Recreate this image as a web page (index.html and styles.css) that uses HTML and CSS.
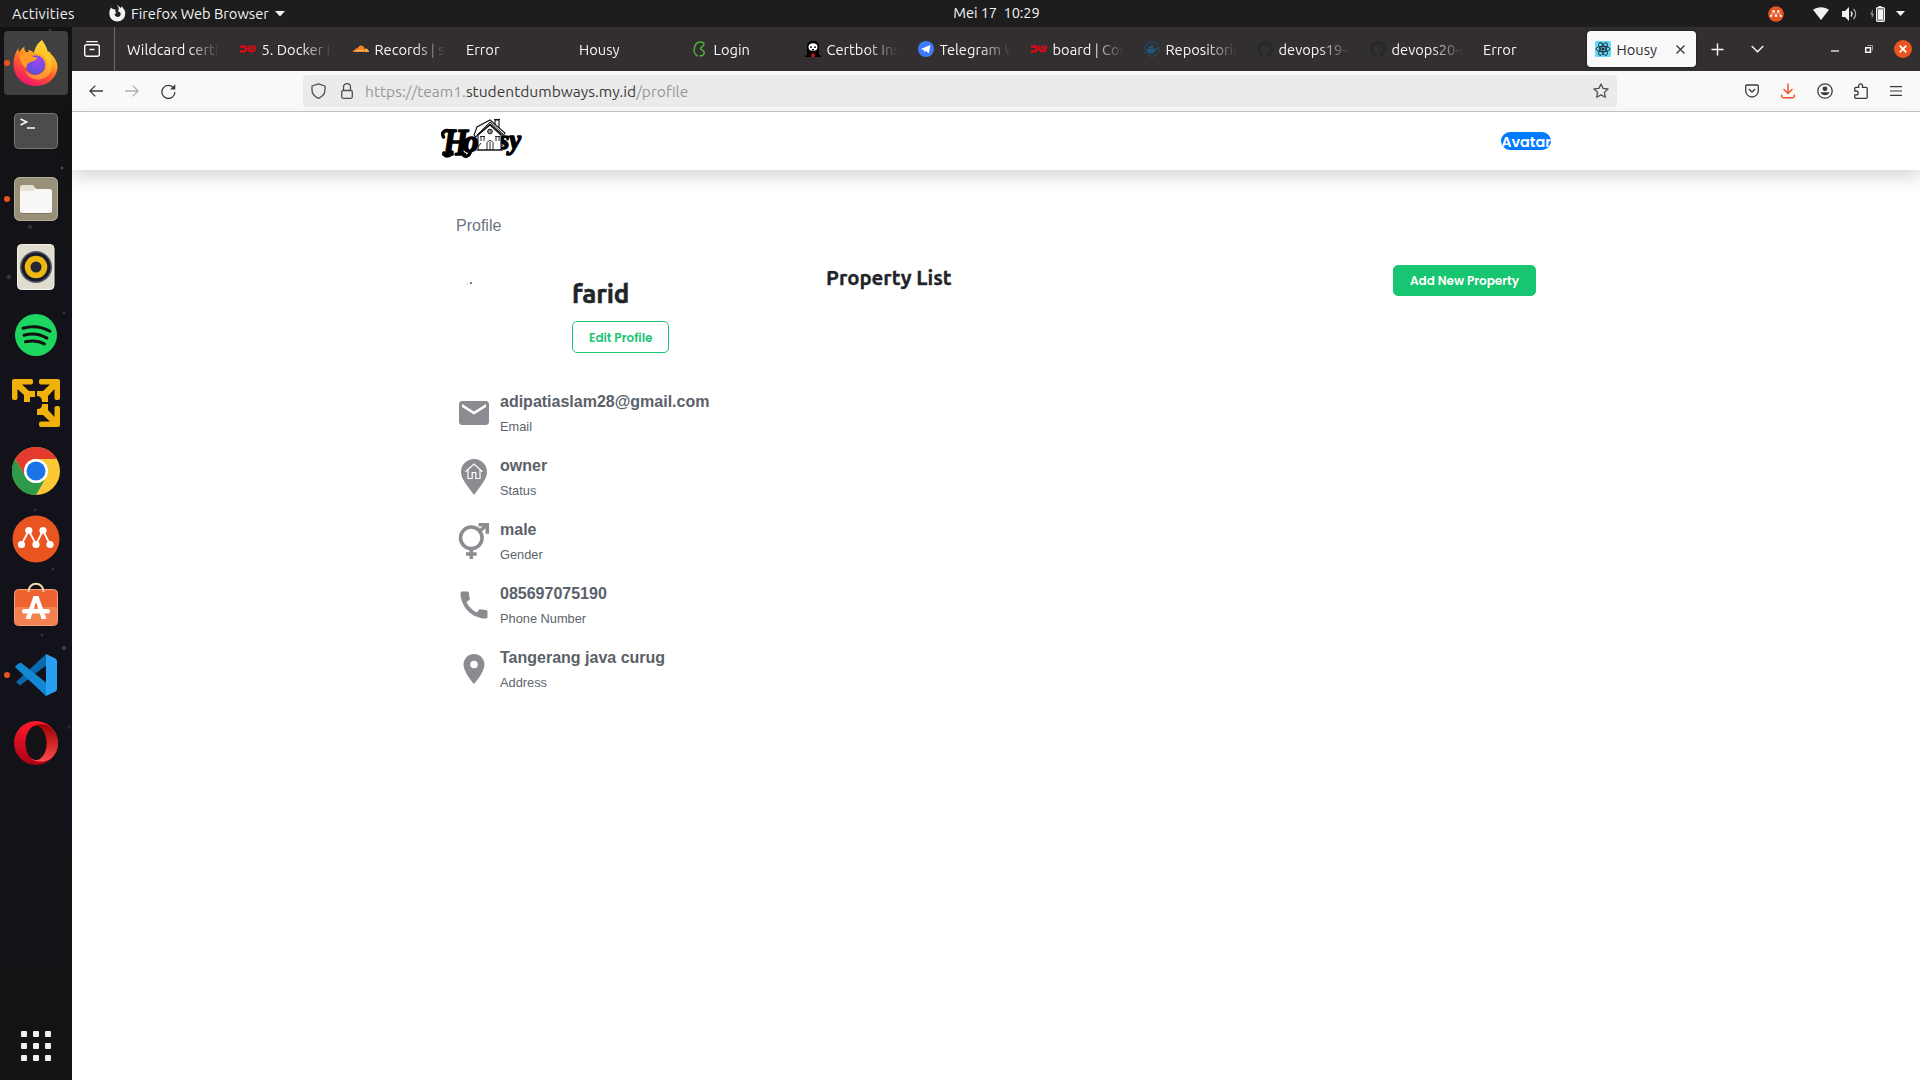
FILE: index.html
```html
<!DOCTYPE html>
<html lang="id">
<head>
<meta charset="utf-8">
<title>Housy</title>
<link rel="stylesheet" href="styles.css">
</head>
<body>
<svg class="defs" width="0" height="0" aria-hidden="true">
  <symbol id="dw" viewBox="0 0 16 16"><path d="M0 5.600h3.600a2.400 2.400 0 0 1 0 4.800H0" fill="none" stroke="#e50914" stroke-width="2.200"/><path d="M8.600 4.400v3.200a2.800 2.800 0 0 0 2.800 2.900h.5a2.800 2.800 0 0 0 2.800-2.900V4.400M11.700 4.400v4" fill="none" stroke="#e50914" stroke-width="2.100"/></symbol>
  <symbol id="github" viewBox="0 0 16 16"><path fill="#24292e" d="M8 0C3.58 0 0 3.58 0 8c0 3.54 2.29 6.53 5.47 7.59.4.07.55-.17.55-.38 0-.19-.01-.82-.01-1.49-2.01.37-2.53-.49-2.69-.94-.09-.23-.48-.94-.82-1.13-.28-.15-.68-.52-.01-.53.63-.01 1.08.58 1.23.82.72 1.21 1.87.87 2.33.66.07-.52.28-.87.51-1.07-1.78-.2-3.64-.89-3.64-3.95 0-.87.31-1.59.82-2.15-.08-.2-.36-1.02.08-2.12 0 0 .67-.21 2.2.82a7.6 7.6 0 0 1 4 0c1.53-1.04 2.2-.82 2.2-.82.44 1.1.16 1.92.08 2.12.51.56.82 1.27.82 2.15 0 3.07-1.87 3.75-3.65 3.95.29.25.54.73.54 1.48 0 1.07-.01 1.93-.01 2.2 0 .21.15.46.55.38A8.01 8.01 0 0 0 16 8c0-4.42-3.58-8-8-8z"/></symbol>
  <symbol id="multipass" viewBox="0 0 48 48"><circle cx="24" cy="24" r="23.500" fill="#e95420"/><path d="M9.500 29.500 16.800 15.500 24 29.500 31 15.500 38 29.500" fill="none" stroke="#fff" stroke-width="1.800"/><g fill="#fff"><circle cx="9.500" cy="29.500" r="3.600"/><circle cx="16.800" cy="15.500" r="3.600"/><circle cx="24" cy="29.500" r="3.600"/><circle cx="31" cy="15.500" r="3.600"/><circle cx="38" cy="29.500" r="3.600"/></g></symbol>
</svg>

<header class="topbar">
  <span class="activities">Activities</span>
  <span class="appmenu">
    <svg width="17" height="17" viewBox="0 0 17 17"><path fill="#f2f2f2" d="M7.500.3C9 1 9.800 2.300 9.800 3.700L9 6.500c2 .2 3 1.500 2.600 3.200-.4 1.500-1.800 2.300-3.200 2.200C6.600 11.800 5.400 10.400 5.700 8.800l1.800-.6L6.300 6.500l.3-1.700-1.900-.6L3 3.500 2.200 2.500C1 4.200.3 6.200.3 8.500a8 8 0 0 0 16 0c0-2.200-.8-3.900-2.300-5.300-.4-.6-.6-1.200-.7-2L11.500 3C10.700 1.700 9.300.6 7.500.3z"/></svg>
    <span class="apptext">Firefox Web Browser</span>
    <svg width="10" height="6" viewBox="0 0 10 6"><path d="M0 0h10L5 5.500z" fill="#f2f2f2"/></svg>
  </span>
  <span class="clock">Mei 17&nbsp; 10:29</span>
  <span class="tray">
    <svg class="tray-mp" width="16" height="16"><use href="#multipass"/></svg>
    <svg class="tray-wifi" width="16" height="13" viewBox="0 0 16 13"><path d="M0 2.800C4.500-.7 11.500-.7 16 2.800L8 13z" fill="#f2f2f2"/></svg>
    <svg class="tray-vol" width="16" height="14" viewBox="0 0 16 14"><path d="M0 4h3l4-4v14l-4-4H0z" fill="#f2f2f2"/><path d="M9 4.500a4 4 0 0 1 0 5" fill="none" stroke="#f2f2f2" stroke-width="1.300"/><path d="M11.500 2a7 7 0 0 1 0 10" fill="none" stroke="#aaa" stroke-width="1.300"/></svg>
    <svg class="tray-bat" width="15" height="16" viewBox="0 0 15 16"><path d="M3 3 0 8.500h1.700V13l2.500-5.500H2.600z" fill="#888"/><path d="M8.500 0h3v1.500h-3z" fill="#f2f2f2"/><rect x="6.700" y="1.700" width="7.600" height="13.600" rx="1" fill="none" stroke="#f2f2f2" stroke-width="1.400"/><path d="M8 3.200h5v10.600H8z" fill="#f2f2f2"/></svg>
    <svg width="9" height="5" viewBox="0 0 9 5"><path d="M0 0h9L4.500 5z" fill="#f2f2f2"/></svg>
  </span>
</header>

<div class="desktop">
  <nav class="dock">
    <div class="app active running"><svg width="46" height="48" viewBox="0 0 46 48">
      <defs>
        <linearGradient id="fx" x1=".8" y1="0" x2=".3" y2="1"><stop offset="0" stop-color="#ffe93f"/><stop offset=".35" stop-color="#ffb01f"/><stop offset=".62" stop-color="#ff5a2b"/><stop offset="1" stop-color="#ee0f72"/></linearGradient>
        <radialGradient id="fp" cx=".6" cy=".3" r=".8"><stop offset="0" stop-color="#a043f5"/><stop offset="1" stop-color="#4c55d6"/></radialGradient>
      </defs>
      <path d="M29 1c2 3 4 6 5 9l1 3c1-1 2 0 3 2 4 4 7 9 6.500 14C43 40 34 47 22.500 47 10 47 1 38 .5 26 .4 19 2 14 5.500 9c0 2 0 3 1 4C8 11 9 9 11.500 7.500c-.5 3 0 4 1.500 5.500h3l-1-2c3 0 5 2 6 3 1-5 3-9 8-13z" fill="url(#fx)"/>
      <path d="M29 1c-5 4-7 8-8 13 6-1 11 3 12 8 2 8-4 14-11 14-5 0-8-2-10-5 2 8 10 11 17 9 9-3 13-12 8-22-1-3-4-6-5-8-1-3-3-6-3-9z" fill="#ffd034" opacity=".55"/>
      <circle cx="22.500" cy="26" r="9.700" fill="url(#fp)"/>
      <path d="M7 15c4-2 8-1 11 1.500 2 1.500 4 2 6.500 2-1 3-4 3.500-7 4.500-3 1.200-4 3-4 6C8 26 6 20 7 15z" fill="#ff9b26"/>
    </svg></div>
    <div class="app"><svg width="44" height="36" viewBox="0 0 44 36"><rect x=".5" y=".5" width="43" height="35" rx="4" fill="#4c4c4c" stroke="#777"/><path d="m6.500 6 6 3-6 3" fill="none" stroke="#f4f4f4" stroke-width="1.800"/><path d="M13 15h8" stroke="#f4f4f4" stroke-width="1.600"/></svg></div>
    <div class="app running"><svg width="44" height="44" viewBox="0 0 44 44"><rect x=".5" y=".5" width="43" height="43" rx="5" fill="#989079" stroke="#b5ae98"/><path d="M6 30V11a3 3 0 0 1 3-3h10l3 4h13v5z" fill="#e4e1d6"/><rect x="6" y="12" width="32" height="24" rx="2.500" fill="#f9f8f7"/><path d="M6 14h13l3-3H10q-4 0-4 3z" fill="#e4e1d6"/><path d="M7 36.500h30" stroke="#7c7561"/></svg></div>
    <div class="app"><svg width="38" height="46" viewBox="0 0 38 46"><rect x=".5" y=".5" width="36.500" height="45" rx="4" fill="#e0dcd0" stroke="#f4f2ea"/><circle cx="19" cy="23" r="16" fill="#585d68"/><circle cx="19" cy="23" r="14.500" fill="#171b2b"/><circle cx="19" cy="23" r="11.300" fill="#eeb711"/><circle cx="19" cy="23" r="5.500" fill="#222733"/></svg></div>
    <div class="app"><svg width="42" height="42" viewBox="0 0 42 42"><circle cx="21" cy="21" r="21" fill="#1ed760"/><path d="M8 14.300c9-2.600 19-1.600 27 3M9 21.300c7.500-2.200 16-1.300 23 2.800M10.500 27.800c6.500-1.500 13.500-1 19 2.200" fill="none" stroke="#121212" stroke-width="3" stroke-linecap="round"/></svg></div>
    <div class="app"><svg width="48" height="48" viewBox="0 0 48 48"><g fill="#f0b20a"><path d="M0 2a2 2 0 0 1 2-2h17a2 2 0 0 1 2 2v1.500A2 2 0 0 1 19 5.500h-9l7 6.500h6v6h-5v5h-6v-7L5.500 10v9a2 2 0 0 1-2 2H2a2 2 0 0 1-2-2z"/><path d="M48 2a2 2 0 0 0-2-2H29a2 2 0 0 0-2 2v1.500a2 2 0 0 0 2 2h9L31 12h-6v5c3 0 5 2 5 6h6v-6l6.500-7v9a2 2 0 0 0 2 2H46a2 2 0 0 0 2-2z"/><path d="M48 46a2 2 0 0 1-2 2H29a2 2 0 0 1-2-2v-1.500a2 2 0 0 1 2-2h9L31 36h-6v-6c3 0 5-1 5-5h6v6l6.500 7v-9a2 2 0 0 1 2-2H46a2 2 0 0 1 2 2z"/></g></svg></div>
    <div class="app"><svg width="48" height="48" viewBox="0 0 48 48"><circle cx="24" cy="24" r="24" fill="#fcc934"/><path d="M3.200 12A24 24 0 0 1 44.800 12H24a12 12 0 0 0-10.400 18z" fill="#e33b2e"/><path d="M3.200 12A24 24 0 0 0 24 48l10.400-18A12 12 0 0 1 13.600 30z" fill="#2d9a4b"/><circle cx="24" cy="24" r="12" fill="#fff"/><circle cx="24" cy="24" r="9.500" fill="#1a73e8"/></svg></div>
    <div class="app"><svg width="48" height="48"><use href="#multipass"/></svg></div>
    <div class="app store"><svg width="46" height="44" viewBox="0 0 46 44"><rect x="1.500" y="7.500" width="43" height="36" rx="4" fill="#ee6330" stroke="#f7a07c"/><path d="M2 25h42v14a4 4 0 0 1-4 4H6a4 4 0 0 1-4-4z" fill="#f2824f"/><path d="M15.500 10C15.500-1 30.500-1 30.500 10" fill="none" stroke="#efdcb6" stroke-width="2"/><path d="M20.500 14h5l8 23h-5l-5.500-17-5.500 17h-5z" fill="#fff"/><rect x="9" y="27" width="28" height="4.500" rx="2" fill="#fff"/></svg></div>
    <div class="app running"><svg width="42" height="42" viewBox="0 0 42 42"><path d="M31 0 1 28l4 3.500 26-20z" fill="#0a68ad"/><path d="M1 14a1.500 1.500 0 0 1 0-2.500L4.500 9Q6 8.500 7 9.500L34 31l-3 11z" fill="#1287d3"/><path d="M31 0l9.500 4.500Q42 5.500 42 7v28q0 1.500-1.500 2.500L31 42z" fill="#27a0f1"/></svg></div>
    <div class="app"><svg width="44" height="44" viewBox="0 0 44 44"><defs><linearGradient id="op" x1="0" y1="0" x2="0" y2="1"><stop offset="0" stop-color="#ff1b2d"/><stop offset="1" stop-color="#a70014"/></linearGradient><linearGradient id="oq" x1="0" y1="0" x2="0" y2="1"><stop offset="0" stop-color="#9c0000"/><stop offset="1" stop-color="#ff4b4b"/></linearGradient></defs><circle cx="22" cy="22" r="22" fill="url(#op)"/><path d="M15 7.500C27-2 44 5 44 22S27 46 15 36.500c6 4 18 1 18-14.500S21 3 15 7.500z" fill="url(#oq)"/><ellipse cx="22" cy="22" rx="10.500" ry="17" fill="#131217"/></svg></div>
    <div class="launcher"><i></i><i></i><i></i><i></i><i></i><i></i><i></i><i></i><i></i></div>
  </nav>

  <main class="browser">
    <div class="tabstrip">
      <div class="view"><svg width="16" height="16" viewBox="0 0 16 16"><path d="M2.500 1.200Q2.700.7 3.300.7h9.400q.6 0 .8.500" fill="none" stroke="#fbfbfe" stroke-width="1.300"/><rect x=".7" y="3.700" width="14.600" height="11.600" rx="2" fill="none" stroke="#fbfbfe" stroke-width="1.400"/><path d="M5.500 8.500h5" stroke="#fbfbfe" stroke-width="1.400"/></svg></div>
      <div class="tab"><span>Wildcard certi</span></div>
      <div class="tab"><svg width="16" height="16"><use href="#dw"/></svg><span>5. Docker I</span></div>
      <div class="tab"><svg width="16" height="16" viewBox="0 0 16 16"><path d="M0 11c0-1.800 1-2.400 2.300-2.300C2.500 7 4 7 4.600 7.500 6 3.500 10.500 3.700 11.500 7.500L11 11z" fill="#f6821f"/><path d="M11.800 7.600C14 7.300 15.800 8.600 16 11h-5z" fill="#fbad41"/><path d="M3 9.700l8-.4" stroke="#fff" stroke-width=".5"/></svg><span>Records | s</span></div>
      <div class="tab"><span>Error</span></div>
      <div class="tab"><span>Housy</span></div>
      <div class="tab"><svg width="16" height="16" viewBox="0 0 16 16"><path d="M6 15C3.500 14.500 1.800 11.500 2.200 8 2.600 4 5 1 8.500.9c2.300 0 3.600 1.100 3.400 2.700C11.700 5.500 8.600 6 8.700 7.700c.1 1.500 3.700 1.600 3.600 4.100-.1 2.200-2.500 3.400-4.600 2.700" fill="none" stroke="#4fb036" stroke-width="1.500"/></svg><span>Login</span></div>
      <div class="tab"><svg width="16" height="16" viewBox="0 0 16 16"><path d="M0 16v-1.500l2-.5V5c0-7 12-7 12 0v9l2 .5V16z" fill="#000"/><path d="M3.500 5.500C3.500 1 12.500 1 12.500 5.500c0 2.500-1 4-2.500 4H6c-1.500 0-2.500-1.500-2.500-4z" fill="#fff"/><path d="M5 5.500h2v1.200H5zM9 5.500h2v1.200H9zM7 8h2v1H7z" fill="#000"/><path d="M6.500 12.500h3V16h-3z" fill="#e11"/></svg><span>Certbot Ins</span></div>
      <div class="tab"><svg width="16" height="16" viewBox="0 0 16 16"><circle cx="8" cy="8" r="8" fill="#3e7bfa"/><path d="m2.800 7.900 9.600-3.900-1.500 8.300-3-2.200-1.500 1.500-.2-2.400z" fill="#fff"/></svg><span>Telegram W</span></div>
      <div class="tab"><svg width="16" height="16"><use href="#dw"/></svg><span>board | Coo</span></div>
      <div class="tab"><svg width="16" height="16" viewBox="0 0 16 16"><circle cx="8" cy="8" r="7.300" fill="none" stroke="#214a66" stroke-width="1.200"/><path d="M2.500 8h8c.9 0 1.200-.6 1-1.800.8.3 1 .8 1 1.200l1.300.2c-.4 1-1 1.200-1.800 1.200-1 2.700-3 3.800-5.200 3.800C4 12.600 2.600 11 2.500 8zM4 5.800h5V7.600H4zM7 4h2v1.500H7z" fill="#23587c"/></svg><span>Repositorie</span></div>
      <div class="tab"><svg width="16" height="16"><use href="#github"/></svg><span>devops19-c</span></div>
      <div class="tab"><svg width="16" height="16"><use href="#github"/></svg><span>devops20-c</span></div>
      <div class="tab"><span>Error</span></div>
      <div class="tab current"><svg width="16" height="16" viewBox="0 0 16 16"><rect width="16" height="16" rx="1.500" fill="#61dafb"/><g fill="none" stroke="#20232a" stroke-width=".9"><ellipse cx="8" cy="8" rx="7" ry="2.700"/><ellipse cx="8" cy="8" rx="7" ry="2.700" transform="rotate(60 8 8)"/><ellipse cx="8" cy="8" rx="7" ry="2.700" transform="rotate(120 8 8)"/></g><circle cx="8" cy="8" r="1.500" fill="#20232a"/></svg><span>Housy</span><svg class="close" width="9" height="9" viewBox="0 0 9 9"><path d="m.5.5 8 8m0-8-8 8" stroke="#333" stroke-width="1.200"/></svg></div>
      <div class="strip-tools">
        <svg class="plus" width="13" height="13" viewBox="0 0 13 13"><path d="M6.500.5v12M.5 6.500h12" stroke="#fbfbfe" stroke-width="1.400"/></svg>
        <svg class="chev" width="13" height="8" viewBox="0 0 13 8"><path d="m.7.9 5.800 5.800L12.300.9" fill="none" stroke="#fbfbfe" stroke-width="1.400"/></svg>
        <svg class="min" width="8" height="2"><path d="M0 1h8" stroke="#fff" stroke-width="1.200"/></svg>
        <svg class="restore" width="8" height="8" viewBox="0 0 8 8"><path d="M.7 2.700h4.800v4.600H.7z" fill="none" stroke="#fff" stroke-width="1.400"/><path d="M2.500.5h5v5" fill="none" stroke="#999"/></svg>
        <svg class="quit" width="18" height="18" viewBox="0 0 18 18"><circle cx="9" cy="9" r="9" fill="#e95420"/><path d="m5.700 5.700 6.600 6.600m0-6.600-6.600 6.600" stroke="#fff" stroke-width="1.700"/></svg>
      </div>
    </div>

    <div class="navbar">
      <svg class="back" width="14" height="12" viewBox="0 0 14 12"><path d="M6.300.6.900 6l5.400 5.400M.9 6H14" fill="none" stroke="#3b3b3b" stroke-width="1.300"/></svg>
      <svg class="fwd" width="14" height="12" viewBox="0 0 14 12"><path d="M7.700.6 13.100 6l-5.400 5.400M13.100 6H0" fill="none" stroke="#b0b0b0" stroke-width="1.300"/></svg>
      <svg class="reload" width="15" height="15" viewBox="0 0 15 15"><path d="M12.700 4.200A6.500 6.500 0 1 0 13.900 8" fill="none" stroke="#3b3b3b" stroke-width="1.300"/><path d="M14.300.3v5.200H9z" fill="#3b3b3b"/></svg>
      <div class="urlbar">
        <svg class="shield" width="15" height="16" viewBox="0 0 15 16"><path d="M7.500.8 14 3v4c0 4-2.700 6.700-6.500 8.300C3.700 13.700 1 11 1 7V3z" fill="none" stroke="#515151" stroke-width="1.300" stroke-linejoin="round"/></svg>
        <svg class="lock" width="12" height="16" viewBox="0 0 12 16"><rect x=".7" y="7.500" width="10.600" height="7.800" rx="1.500" fill="none" stroke="#515151" stroke-width="1.300"/><path d="M2.500 7.500V4a3.500 3.500 0 0 1 7 0v3.500" fill="none" stroke="#515151" stroke-width="1.300"/></svg>
        <span class="url">https://team1.<b>studentdumbways.my.id</b>/profile</span>
        <svg class="star" width="16" height="16" viewBox="0 0 16 16"><path d="m8 1 2.100 4.400 4.900.6-3.600 3.400.9 4.900L8 11.900l-4.300 2.400.9-4.900L1 6l4.900-.6z" fill="none" stroke="#515151" stroke-width="1.300" stroke-linejoin="round"/></svg>
      </div>
      <div class="nav-tools">
        <svg width="14" height="14" viewBox="0 0 14 14"><path d="M2 1h10q1.300 0 1.300 1.300v4.400a6.300 6.300 0 0 1-12.600 0V2.300Q.7 1 2 1z" fill="none" stroke="#3b3b3b" stroke-width="1.300"/><path d="m3.800 5 3.200 3.100L10.200 5" fill="none" stroke="#3b3b3b" stroke-width="1.400"/></svg>
        <svg width="14" height="16" viewBox="0 0 14 16"><path d="M7 .5v9.800M2.500 6 7 10.500 11.500 6M.7 11.500v1.800q0 1.400 1.400 1.400h9.800q1.400 0 1.400-1.400v-1.800" fill="none" stroke="#e95420" stroke-width="1.400"/></svg>
        <svg width="16" height="16" viewBox="0 0 16 16"><circle cx="8" cy="8" r="7.200" fill="none" stroke="#3b3b3b" stroke-width="1.300"/><circle cx="8" cy="5.800" r="2.400" fill="#3b3b3b"/><path d="M3.400 9.200h9.200a5 5 0 0 1-9.200 0z" fill="#3b3b3b"/></svg>
        <svg width="14" height="16" viewBox="0 0 14 16"><path d="M.8 8V5.300q0-1 1-1h2.900V2.700a1.900 1.900 0 0 1 3.800 0v1.600h3.700q1 0 1 1v9q0 1-1 1H1.800q-1 0-1-1v-2.500h1.500a1.900 1.900 0 0 0 0-3.800z" fill="none" stroke="#3b3b3b" stroke-width="1.300"/></svg>
        <svg width="12" height="10" viewBox="0 0 12 10"><path d="M0 .7h12M0 5h12M0 9.300h12" stroke="#3b3b3b" stroke-width="1.200"/></svg>
      </div>
    </div>

    <div class="page">
      <div class="site-nav">
        <svg class="logo" width="82" height="42" viewBox="0 0 82 42">
          <text class="script" y="37"><tspan x="2" font-size="37" textLength="25" lengthAdjust="spacingAndGlyphs">H</tspan><tspan x="22" dy="-3" font-size="31">o</tspan></text>
          <text class="script" x="58" y="31" font-size="28" textLength="22" lengthAdjust="spacingAndGlyphs">sy</text>
          <path d="M2.500 19C0 14 4 11.500 9 13h4M3 35c1 4 6 4 8-1M22 36c2 4 6 2 7-1" fill="none" stroke="#000" stroke-width="3.500" stroke-linecap="round"/>
          <g fill="#fff" stroke="#111" stroke-width="1.100"><path d="M37 17v15h23V17L49 7z"/><path d="M54 9V2h4v10"/><path d="M53 1.500h6"/><path d="m33 17 3-8 13-7 15 13-2 2.500L49 6 34.500 19z"/></g>
          <g fill="none" stroke="#111" stroke-width=".9"><path d="m36 17 13-13 13 12M33 32h29M46 32v-7.500q3-4 6 0V32M49 24v8M39 18.500h5M54 18.500h5M40 19v4M43 19v4M55 19v4M58 19v4M37 29l3-4M60 25l3 5"/><circle cx="49" cy="13.500" r="2.400" fill="#888"/></g>
        </svg>
        <span class="avatar">Avatar</span>
      </div>
      <div class="content">
        <section class="profile">
          <p class="crumb">Profile</p>
          <div class="person">
            <svg class="photo" width="116" height="92" viewBox="0 0 116 92"><path d="M11 17h1v1h-1z" fill="#aaa"/><path d="M14 16h2v2h-2z" fill="#777"/></svg>
            <div><h3>farid</h3><button class="btn outline">Edit Profile</button></div>
          </div>
          <ul class="facts">
            <li><svg viewBox="0 0 24 24"><path d="M20 4H4c-1.100 0-1.990.9-1.990 2L2 18c0 1.100.9 2 2 2h16c1.100 0 2-.9 2-2V6c0-1.100-.9-2-2-2zm0 4-8 5-8-5V6l8 5 8-5z"/></svg><div><b>adipatiaslam28@gmail.com</b><small>Email</small></div></li>
            <li><svg viewBox="0 0 36 36"><path d="M18 0A13 13 0 0 0 5 13c0 5 3 9 6 13.500 2.500 3.500 5 6.500 7 9.500 2-3 4.500-6 7-9.500C28 22 31 18 31 13A13 13 0 0 0 18 0z"/><path d="M9.500 12.700 18 5l8.500 7.700M12 11v8.500h4.200v-5.800h3.600v5.800H24V11" fill="none" stroke="#fff" stroke-width="1.200"/></svg><div><b>owner</b><small>Status</small></div></li>
            <li><svg viewBox="0 0 36 36"><g fill="none" stroke="#8b8c91" stroke-width="3.500"><circle cx="15.300" cy="14.800" r="10.800"/><path d="M15.300 25.600V36M10 30.900h10.700"/><path d="M22.500 1.700h8.800v9M31 2l-8.500 7"/></g></svg><div><b>male</b><small>Gender</small></div></li>
            <li><svg viewBox="0 0 24 24"><path d="M20.010 15.380c-1.230 0-2.420-.2-3.530-.56a.977.977 0 0 0-1.010.24l-1.570 1.970c-2.830-1.350-5.480-3.900-6.890-6.830l1.950-1.660c.27-.28.35-.67.24-1.020-.37-1.110-.56-2.300-.56-3.530 0-.54-.45-.99-.99-.99H4.190C3.650 3 3 3.240 3 3.990 3 13.280 10.730 21 20.010 21c.71 0 .99-.63.99-1.180v-3.450c0-.54-.45-.99-.99-.99z"/></svg><div><b>085697075190</b><small>Phone Number</small></div></li>
            <li><svg viewBox="0 0 24 24"><path d="M12 2C8.130 2 5 5.130 5 9c0 5.250 7 13 7 13s7-7.750 7-13c0-3.870-3.130-7-7-7zm0 9.500a2.500 2.500 0 0 1 0-5 2.500 2.500 0 0 1 0 5z"/></svg><div><b>Tangerang java curug</b><small>Address</small></div></li>
          </ul>
        </section>
        <section class="properties"><h5>Property List</h5><button class="btn solid">Add New Property</button></section>
      </div>
    </div>
  </main>
</div>
</body>
</html>
```
FILE: styles.css
```css
* { box-sizing: border-box; }
body {
  margin: 0;
  width: 1920px;
  height: 1080px;
  overflow: hidden;
  display: flex;
  flex-direction: column;
  background: #fff;
  font-family: Ubuntu, "Noto Sans", sans-serif;
  font-size: 14.67px;
}
svg { display: block; flex: none; }
.defs { display: none; }

.topbar {
  height: 27px;
  flex: none;
  display: grid;
  grid-template-columns: 109px 1fr auto 1fr;
  align-items: center;
  background: #1d1d1d;
  color: #f2f2f2;
  white-space: nowrap;
}
.activities { padding-left: 12px; letter-spacing: .25px; }
.appmenu { display: flex; align-items: center; }
.appmenu .apptext { margin: 0 6px 0 5px; }
.clock { letter-spacing: -.1px; transform: translate(-18px, -1px); }
.tray { display: flex; align-items: center; justify-content: flex-end; padding-right: 15px; }
.tray-mp { margin-right: 29px; }
.tray-wifi { margin-right: 13px; }
.tray-vol { margin-right: 12px; }
.tray-bat { margin-right: 11px; }

.desktop { flex: 1; display: flex; min-height: 0; }
.dock {
  width: 72px;
  flex: none;
  padding: 4px;
  display: flex;
  flex-direction: column;
  gap: 4px;
  background:
    radial-gradient(circle 2px at 13px 50px, #604a42, transparent),
    radial-gradient(circle 2px at 50px 3px, #57453d, transparent),
    radial-gradient(circle 2px at 62px 141px, #6b655e, transparent),
    radial-gradient(circle 3px at 30px 200px, #4a3c44, transparent),
    radial-gradient(circle 3px at 9px 250px, #57473c, transparent),
    radial-gradient(circle 2px at 64px 286px, #45404c, transparent),
    radial-gradient(circle 2px at 35px 483px, #4a463e, transparent),
    radial-gradient(circle 2px at 53px 542px, #46424d, transparent),
    radial-gradient(circle 2px at 42px 608px, #4a463e, transparent),
    radial-gradient(circle 3px at 64px 621px, #55525a, transparent),
    radial-gradient(circle 3px at 69px 700px, #2a2833, transparent),
    linear-gradient(#131314, #13121a 35%, #12121a 65%, #141415);
}
.app {
  position: relative;
  height: 64px;
  flex: none;
  border-radius: 4px;
  display: flex;
  align-items: center;
  justify-content: center;
}
.app.active { background: #404041; }
.app.store { padding-bottom: 7px; }
.app.running::before {
  content: "";
  position: absolute;
  left: 0;
  top: 29px;
  width: 6px;
  height: 6px;
  border-radius: 50%;
  background: #e95420;
}
.launcher {
  margin: auto 0 15px 17px;
  display: grid;
  grid-template-columns: repeat(3, 6px);
  gap: 6px;
}
.launcher i { height: 6px; border-radius: 1px; background: #f0efed; }

.browser { flex: 1; min-width: 0; display: flex; flex-direction: column; }
.tabstrip {
  height: 44px;
  flex: none;
  display: flex;
  align-items: center;
  background: #332f30;
  color: #f6f6f6;
}
.view {
  width: 43px;
  height: 44px;
  flex: none;
  border-right: 1px solid #6b6869;
  display: flex;
  align-items: center;
  padding-left: 12px;
}
.tab {
  width: 113px;
  flex: none;
  padding: 0 8px 0 12px;
  display: flex;
  align-items: center;
  gap: 5.500px;
}
.tab span {
  flex: 1;
  min-width: 0;
  overflow: hidden;
  white-space: nowrap;
  line-height: 22px;
  padding-top: 1px;
  -webkit-mask-image: linear-gradient(to left, transparent, #000 32px);
  mask-image: linear-gradient(to left, transparent, #000 32px);
}
.tab.current {
  width: 109px;
  height: 36px;
  margin-left: 3px;
  padding: 0 11.500px 0 8px;
  border-radius: 4px;
  background: #f9f9fa;
  color: #2d2d2d;
  box-shadow: 0 0 3px rgba(0, 0, 0, .6);
}
.tab.current span { -webkit-mask-image: none; mask-image: none; }
.strip-tools { flex: 1; display: flex; align-items: center; padding-left: 15px; }
.plus { margin-right: 27px; }
.chev { margin-right: 67px; }
.min { margin: 4px 26px 0 0; }
.restore { margin-right: 21px; }

.navbar {
  height: 41px;
  flex: none;
  padding-right: 18px;
  display: flex;
  align-items: center;
  background: #f9f9fa;
  border-bottom: 1px solid #c6c6c6;
}
.back { margin: 0 22px 0 17px; }
.reload { margin: 1px 127px 0 22px; }
.urlbar {
  width: 1314px;
  height: 32px;
  border-radius: 4px;
  padding: 0 8px;
  display: flex;
  align-items: center;
  background: #ebebeb;
}
.shield { margin-right: 15px; }
.lock { margin-right: 12px; }
.url { flex: 1; color: #97979a; font-size: 15.56px; }
.url b { font-weight: 400; color: #3a3a3a; }
.nav-tools { flex: 1; display: flex; align-items: center; justify-content: space-between; padding-left: 128px; }

.page { flex: 1; background: #fff; font-family: "Liberation Sans", Arial, sans-serif; font-size: 16px; }
.site-nav {
  height: 58px;
  padding: 0 369px;
  display: flex;
  justify-content: space-between;
  align-items: center;
  box-shadow: 0 8px 16px rgba(0, 0, 0, .15);
}
.logo { margin-bottom: 4px; }
.script {
  font-family: "Liberation Serif", serif;
  font-weight: 700;
  font-style: italic;
  stroke: #000;
  stroke-width: 1.600px;
  stroke-linejoin: round;
}
.avatar {
  height: 18px;
  border-radius: 9px;
  overflow: hidden;
  background: #007bff;
  color: #fff;
  font: 600 14.400px/20px Poppins, Inter, sans-serif;
}
.content {
  padding: 44px 384px 0;
  display: grid;
  grid-template-columns: 370px 1fr;
}
.crumb { margin: 0; line-height: 24px; color: #6c757d; }
.person { height: 151px; padding-top: 28px; display: flex; }
h3 {
  margin: 0 0 11px;
  padding-top: 11px;
  color: #212529;
  font: 700 26px/33px Ubuntu, "Noto Sans", sans-serif;
  letter-spacing: -.2px;
  -webkit-text-stroke: .5px #212529;
}
.btn {
  height: 32px;
  padding: 0 16px;
  border: 1px solid #18c671;
  border-radius: 5px;
  font: 600 12px/30px Poppins, Inter, sans-serif;
  white-space: nowrap;
}
.outline { padding-top: 1px; background: #fff; color: #18c671; }
.solid { height: 31px; background: #18c671; color: #fff; }
.facts { margin: 0; padding: 0; list-style: none; display: grid; gap: 16px; }
.facts li { height: 48px; display: flex; gap: 8px; align-items: center; color: #5a6169; line-height: 24px; }
.facts svg { width: 36px; height: 36px; fill: #8b8c91; }
.facts div { padding-top: 2px; }
.facts b, .facts small { display: block; }
.facts small { font-size: 12.800px; color: #5c646c; padding-top: 1px; height: 24px; }
.properties { display: flex; justify-content: space-between; align-items: flex-start; padding: 51px 0 0; }
.properties h5 {
  margin: 0;
  color: #212529;
  font: 700 20.400px/26px Ubuntu, "Noto Sans", sans-serif;
  -webkit-text-stroke: .3px #212529;
}
```
